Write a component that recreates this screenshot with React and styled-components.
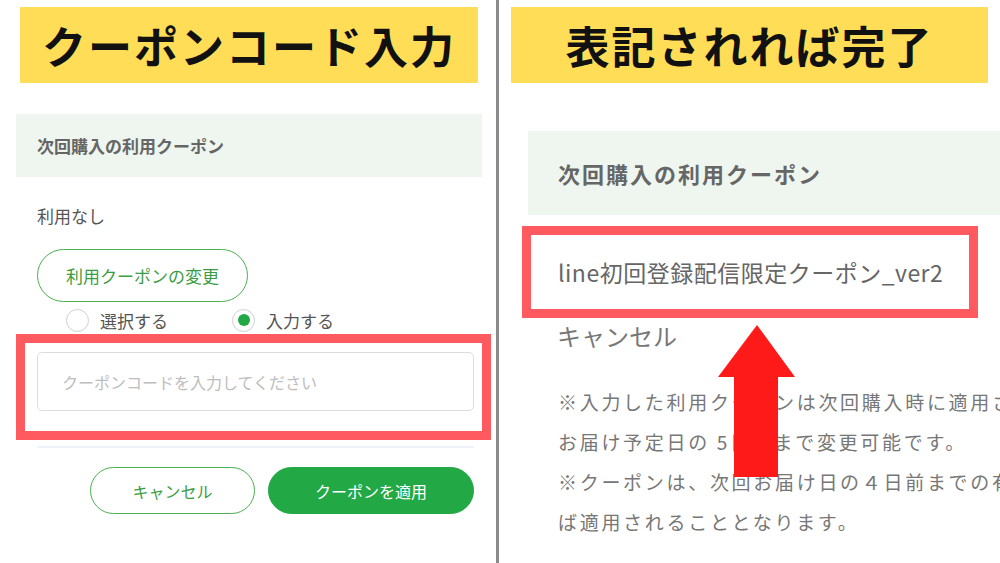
import styled, { createGlobalStyle } from "styled-components";

const GlobalStyle = createGlobalStyle`
  body {
    margin: 0;
    font-family: "Noto Sans CJK JP", "Noto Sans", sans-serif;
    background: #fff;
  }
`;

const Page = styled.div`
  display: flex;
  width: 1000px;
  height: 563px;
  overflow: hidden;
  background: #fff;
`;

const Panel = styled.div`
  position: relative;
  display: flex;
  flex-direction: column;
  width: ${({ width }) => width}px;
  flex-shrink: 0;
  overflow: hidden;
`;

const Divider = styled.div`
  width: 3px;
  background: #8a8a8a;
  flex-shrink: 0;
`;

const Banner = styled.div`
  display: flex;
  align-items: center;
  justify-content: center;
  height: 76px;
  margin: 7px 0 0 ${({ left }) => left}px;
  width: ${({ width }) => width}px;
  background: #ffdd57;
  color: #111;
  font-size: 44px;
  font-weight: 700;
  letter-spacing: 2px;
`;

const SectionHead = styled.div`
  display: flex;
  align-items: center;
  flex-shrink: 0;
  background: #eef6ef;
  color: #666;
  font-weight: 700;
  margin-top: ${({ top }) => top}px;
  margin-left: ${({ left }) => left}px;
  width: ${({ width }) => width}px;
  height: ${({ height }) => height}px;
  padding-left: ${({ pad }) => pad}px;
  font-size: ${({ size }) => size}px;
  letter-spacing: ${({ spacing }) => spacing || 0}px;
  box-sizing: border-box;
`;

const Plain = styled.div`
  margin: 26px 0 0 37px;
  font-size: 17px;
  line-height: 26px;
  color: #555;
`;

const OutlineButton = styled.button`
  all: unset;
  box-sizing: border-box;
  display: flex;
  align-items: center;
  justify-content: center;
  flex-shrink: 0;
  width: ${({ width }) => width}px;
  height: ${({ height }) => height}px;
  border: 1.5px solid #4caf50;
  border-radius: 30px;
  background: #fff;
  color: #3a9d43;
  font-family: "Noto Sans CJK JP", sans-serif;
  font-size: ${({ size }) => size || 16}px;
`;

const ChangeButton = styled(OutlineButton)`
  margin: 20px 0 0 37px;
`;

const RadioRow = styled.div`
  display: flex;
  align-items: center;
  margin: 7px 0 0 66px;
  height: 22px;
`;

const RadioItem = styled.label`
  display: flex;
  align-items: center;
  gap: 11px;
  width: 166px;
  font-size: 17px;
  color: #555;
`;

const RadioMark = styled.span`
  box-sizing: border-box;
  display: flex;
  align-items: center;
  justify-content: center;
  width: 23px;
  height: 23px;
  border: 1.5px solid #cfcfcf;
  border-radius: 50%;
  &::after {
    content: "";
    display: ${({ checked }) => (checked ? "block" : "none")};
    width: 12px;
    height: 12px;
    border-radius: 50%;
    background: #22a845;
  }
`;

const Highlight = styled.div`
  box-sizing: border-box;
  flex-shrink: 0;
  border: 9px solid #ff5a5f;
  margin-top: ${({ top }) => top}px;
  margin-left: ${({ left }) => left}px;
  width: ${({ width }) => width}px;
  height: ${({ height }) => height}px;
  padding: ${({ pad }) => pad};
  display: flex;
  align-items: ${({ center }) => (center ? "center" : "flex-start")};
`;

const CodeInput = styled.div`
  box-sizing: border-box;
  width: 437px;
  height: 59px;
  border: 1px solid #ddd;
  border-radius: 5px;
  display: flex;
  align-items: center;
  padding-left: 24px;
  color: #bdbdbd;
  font-size: 16px;
`;

const Rule = styled.div`
  margin: 6px 0 0 37px;
  width: 437px;
  height: 2px;
  background: #eef3f9;
`;

const Actions = styled.div`
  display: flex;
  justify-content: flex-end;
  gap: 13px;
  margin: 19px 22px 0 0;
`;

const SolidButton = styled(OutlineButton)`
  background: #22a845;
  border-color: #22a845;
  color: #fff;
`;

const CouponName = styled.div`
  font-size: 23px;
  letter-spacing: 0.5px;
  color: #666;
  white-space: nowrap;
`;

const CancelText = styled.div`
  margin: 2px 0 0 58px;
  font-size: 24px;
  line-height: 32px;
  color: #777;
`;

const Notes = styled.div`
  margin: 30px 0 0 59px;
  display: flex;
  flex-direction: column;
`;

const NoteLine = styled.div`
  white-space: nowrap;
  font-size: 19px;
  line-height: 40px;
  letter-spacing: 2.7px;
  color: #777;
`;

const Arrow = styled.svg`
  position: absolute;
  left: 219px;
  top: 325px;
`;

export default function App() {
  return (
    <>
      <GlobalStyle />
      <Page>
        <Panel width={496}>
          <Banner left={20} width={458}>
            クーポンコード入力
          </Banner>
          <SectionHead top={31} left={16} width={466} height={63} pad={21} size={17}>
            次回購入の利用クーポン
          </SectionHead>
          <Plain>利用なし</Plain>
          <ChangeButton width={211} height={53} size={17}>
            利用クーポンの変更
          </ChangeButton>
          <RadioRow>
            <RadioItem>
              <RadioMark />
              選択する
            </RadioItem>
            <RadioItem>
              <RadioMark checked />
              入力する
            </RadioItem>
          </RadioRow>
          <Highlight top={3} left={16} width={475} height={106} pad="9px 8px 0 12px">
            <CodeInput>クーポンコードを入力してください</CodeInput>
          </Highlight>
          <Rule />
          <Actions>
            <OutlineButton width={165} height={47}>
              キャンセル
            </OutlineButton>
            <SolidButton width={206} height={47}>
              クーポンを適用
            </SolidButton>
          </Actions>
        </Panel>
        <Divider />
        <Panel width={501}>
          <Banner left={12} width={477}>
            表記されれば完了
          </Banner>
          <SectionHead top={48} left={29} width={500} height={84} pad={30} size={22} spacing={2}>
            次回購入の利用クーポン
          </SectionHead>
          <Highlight top={11} left={23} width={456} height={92} pad="0 0 0 27px" center>
            <CouponName>line初回登録配信限定クーポン_ver2</CouponName>
          </Highlight>
          <CancelText>キャンセル</CancelText>
          <Notes>
            <NoteLine>※入力した利用クーポンは次回購入時に適用されます。</NoteLine>
            <NoteLine>お届け予定日の 5日前まで変更可能です。</NoteLine>
            <NoteLine>※クーポンは、次回お届け日の４日前までの有効期限であれ</NoteLine>
            <NoteLine>ば適用されることとなります。</NoteLine>
          </Notes>
          <Arrow width="77" height="152" viewBox="0 0 77 152">
            <polygon points="39,0 77,52 60,52 60,152 16,152 16,52 0,52" fill="#ff1a1a" />
          </Arrow>
        </Panel>
      </Page>
    </>
  );
}
